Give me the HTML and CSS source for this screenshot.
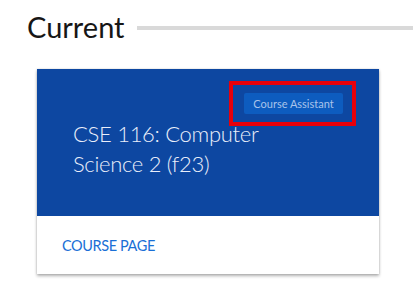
FILE: index.html
```html
<!DOCTYPE html>
<html>
<head>
<meta charset="utf-8">
<link rel="stylesheet" href="styles.css">
</head>
<body>
<div class="page">
  <div class="section-head">
    <h2 class="section-title">Current</h2>
    <div class="section-rule"></div>
  </div>
  <div class="card">
    <div class="card-top">
      <div class="badge-row">
        <span class="badge">Course Assistant<span class="highlight"></span></span>
      </div>
      <div class="course-title">CSE 116: Computer<br>Science 2 (f23)</div>
    </div>
    <div class="card-actions">
      <a class="course-link" href="#">COURSE PAGE</a>
    </div>
  </div>
</div>
</body>
</html>
```

FILE: styles.css
```css
html, body {
  margin: 0;
  padding: 0;
  background: #ffffff;
  font-family: "Lato", "Open Sans", sans-serif;
}
.page {
  padding: 9px 0 28px 27px;
}
.section-head {
  display: flex;
  align-items: center;
}
.section-title {
  margin: 0;
  font-size: 29px;
  font-weight: 400;
  color: #161616;
  line-height: 36px;
}
.section-rule {
  flex: 1;
  height: 4px;
  background: #d9d9d9;
  margin-left: 12px;
  margin-top: 2px;
}
.card {
  margin: 24px 0 0 10px;
  width: 342px;
  box-shadow: 0 2px 3px rgba(0,0,0,0.3), 0 0 2px rgba(0,0,0,0.15);
  background: #fff;
}
.card-top {
  background: #0d47a1;
  height: 147px;
  box-sizing: border-box;
  padding: 24px 36px 0 36px;
  display: flex;
  flex-direction: column;
}
.badge-row {
  display: flex;
  justify-content: flex-end;
}
.badge {
  position: relative;
  display: inline-block;
  background: #0d5cbf;
  color: #a9c3ea;
  font-size: 11px;
  line-height: 21px;
  height: 21px;
  width: 99px;
  text-align: center;
  border-radius: 2px;
}
.highlight {
  position: absolute;
  left: -15px;
  right: -13px;
  top: -12px;
  bottom: -12px;
  border: 4px solid #e8000b;
}
.course-title {
  margin-top: 5px;
  color: #e9eefa;
  font-size: 22px;
  letter-spacing: -0.3px;
  font-weight: 300;
  line-height: 30px;
}
.card-actions {
  height: 58px;
  display: flex;
  align-items: center;
  padding-left: 25px;
}
.course-link {
  color: #1a6fd6;
  text-decoration: none;
  font-size: 14.5px;
  letter-spacing: -0.4px;
}
```
